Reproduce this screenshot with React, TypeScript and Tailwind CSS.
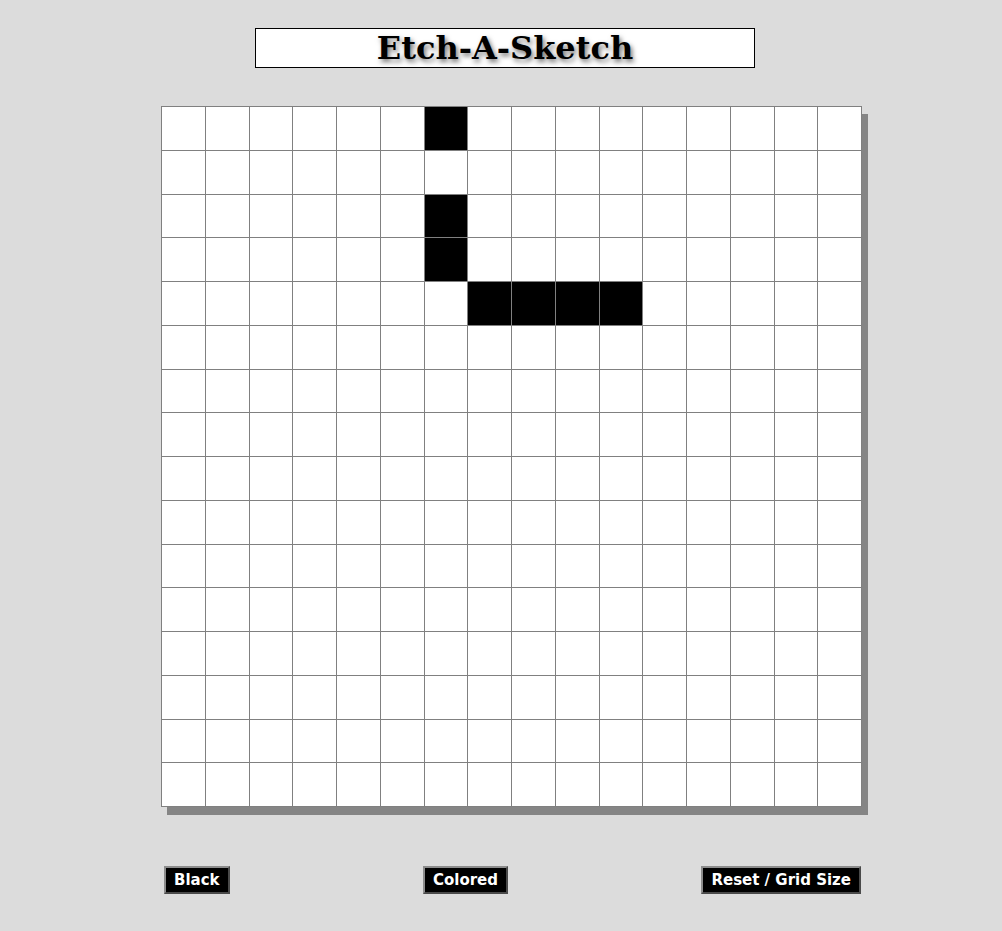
const SIZE = 16;
const filled = new Set(["0-6", "2-6", "3-6", "4-7", "4-8", "4-9", "4-10"]);

function Cell({ on }: { on: boolean }) {
	return <div className={on ? "bg-black" : "bg-white"} />;
}

const btn =
	"h-[28px] px-[8px] bg-black text-white font-['DejaVu_Sans',sans-serif] font-bold text-[15px] leading-none border-2 border-t-[#8c8c8c] border-l-[#8c8c8c] border-b-[#4a4a4a] border-r-[#4a4a4a]";

export default function App() {
	const cells = [];
	for (let r = 0; r < SIZE; r++) {
		for (let c = 0; c < SIZE; c++) {
			cells.push(<Cell key={`${r}-${c}`} on={filled.has(`${r}-${c}`)} />);
		}
	}

	return (
		<div className="min-h-[931px] bg-[#dcdcdc] pl-[161px] pt-[28px] flex flex-col items-start">
			<div className="ml-[94px] w-[500px] h-[40px] border border-black bg-white flex items-center justify-center">
				<h1
					className="font-['DejaVu_Serif',serif] font-bold text-[32px] leading-[38px] text-black"
					style={{ textShadow: "2px 3px 5px rgba(0,0,0,0.55)" }}
				>
					Etch-A-Sketch
				</h1>
			</div>

			<div className="mt-[38px] w-[701px] h-[701px] p-px gap-px bg-[#808080] grid grid-cols-16 grid-rows-16 shadow-[6px_8px_0_#858585]">
				{cells}
			</div>

			<div className="mt-[59px] ml-[3px] w-[697px] flex justify-between">
				<button type="button" className={btn}>
					Black
				</button>
				<button type="button" className={btn}>
					Colored
				</button>
				<button type="button" className={btn}>
					Reset / Grid Size
				</button>
			</div>
		</div>
	);
}
